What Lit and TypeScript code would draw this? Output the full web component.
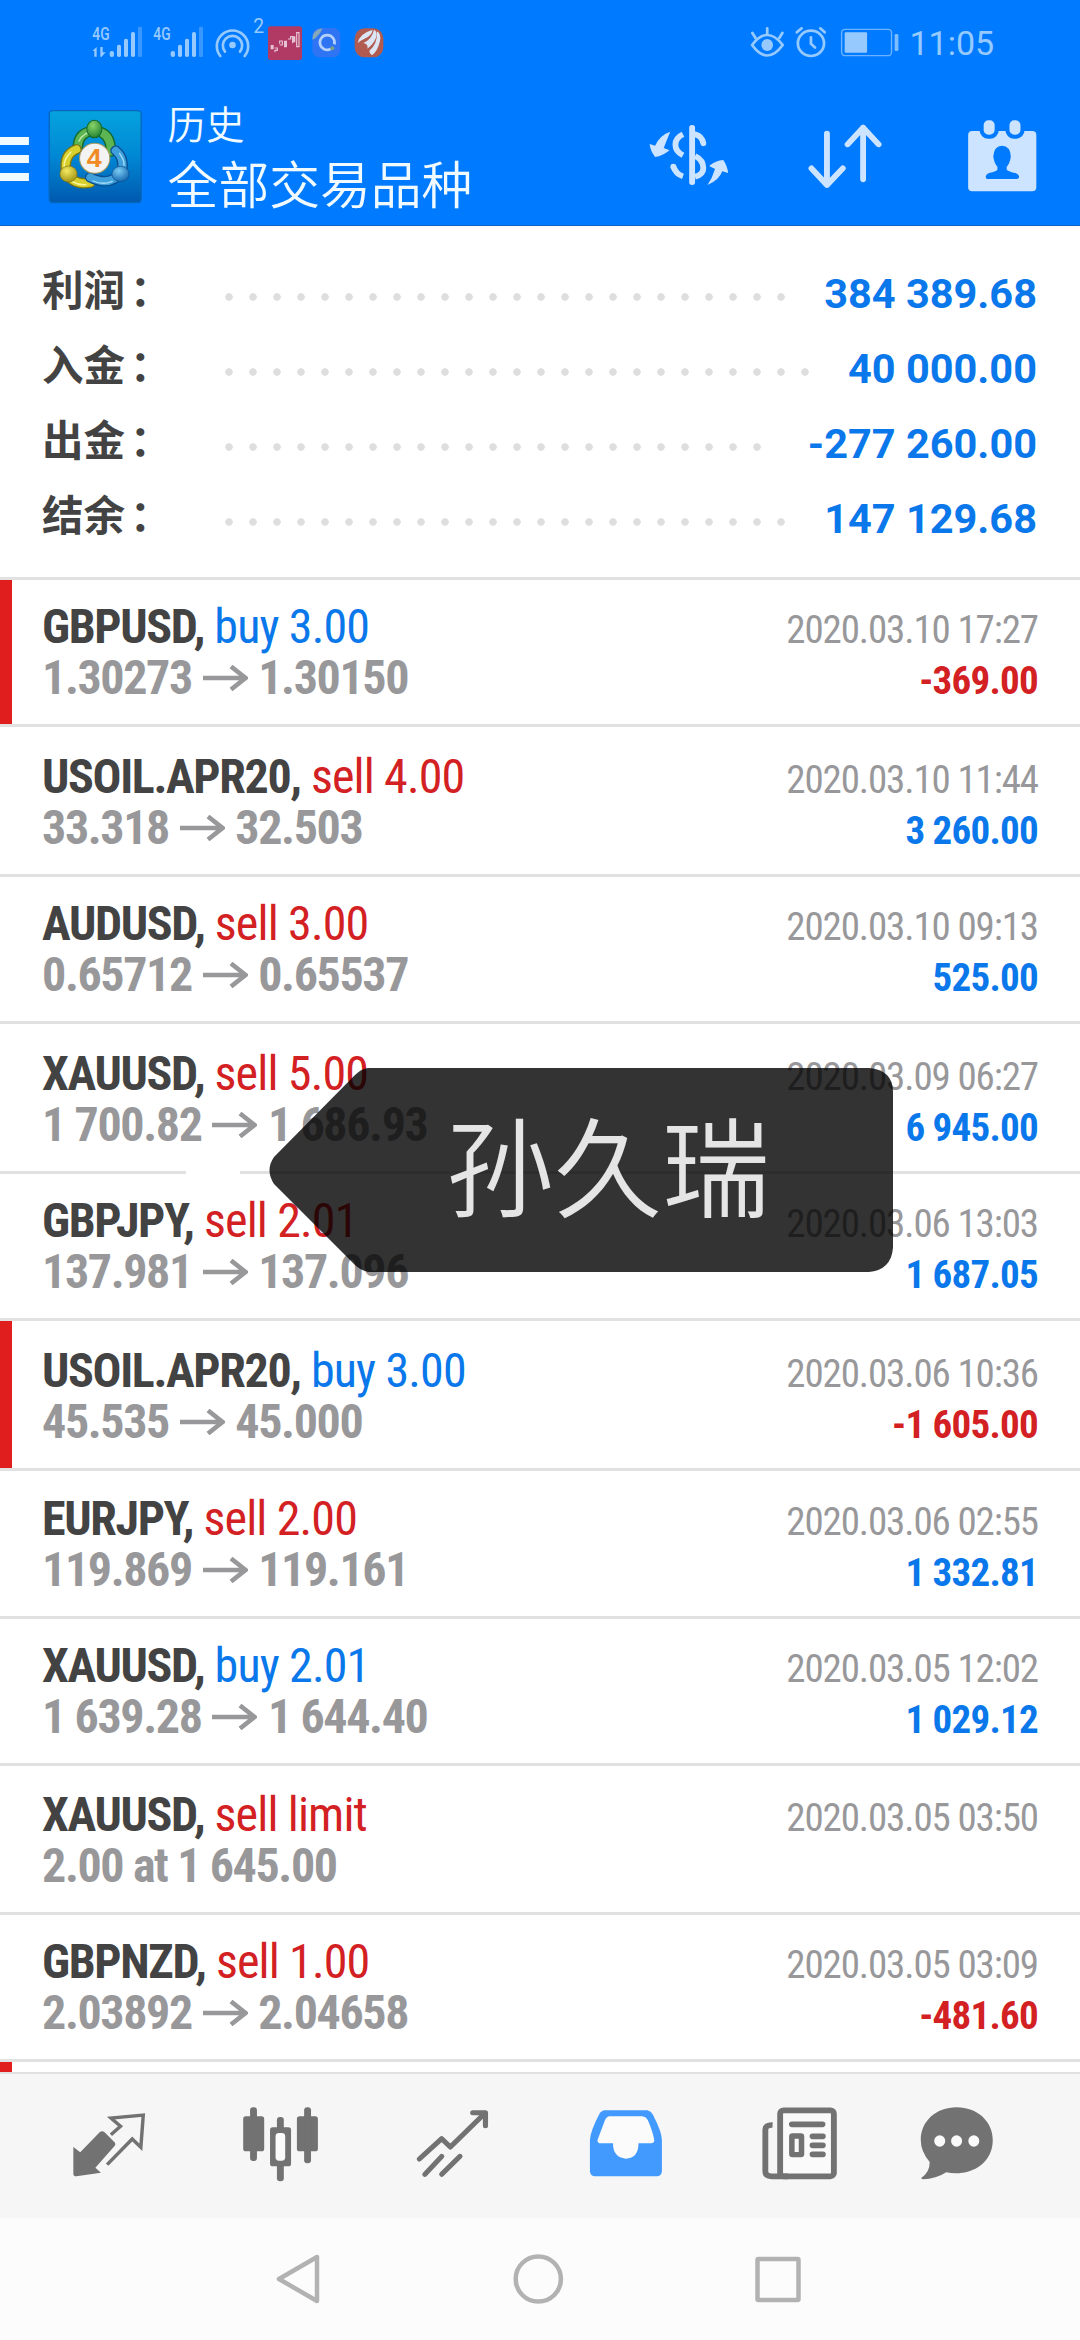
import { LitElement, html, svg, css, nothing, type TemplateResult } from "lit";
import { customElement, property } from "lit/decorators.js";
import { classMap } from "lit/directives/class-map.js";
import { styleMap } from "lit/directives/style-map.js";

interface Deal {
  symbol: string;
  side: "buy" | "sell";
  volume: string;
  from: string;
  to?: string;
  time: string;
  profit?: string;
  marked?: boolean;
  /** Additional space above the text, in pixels. */
  lead?: number;
}

const DEALS: Deal[] = [
  { symbol: "GBPUSD", side: "buy", volume: "3.00", from: "1.30273", to: "1.30150", time: "2020.03.10 17:27", profit: "-369.00", marked: true },
  { symbol: "USOIL.APR20", side: "sell", volume: "4.00", from: "33.318", to: "32.503", time: "2020.03.10 11:44", profit: "3 260.00", lead: 3 },
  { symbol: "AUDUSD", side: "sell", volume: "3.00", from: "0.65712", to: "0.65537", time: "2020.03.10 09:13", profit: "525.00" },
  { symbol: "XAUUSD", side: "sell", volume: "5.00", from: "1 700.82", to: "1 686.93", time: "2020.03.09 06:27", profit: "6 945.00", lead: 3 },
  { symbol: "GBPJPY", side: "sell", volume: "2.01", from: "137.981", to: "137.096", time: "2020.03.06 13:03", profit: "1 687.05" },
  { symbol: "USOIL.APR20", side: "buy", volume: "3.00", from: "45.535", to: "45.000", time: "2020.03.06 10:36", profit: "-1 605.00", marked: true, lead: 3 },
  { symbol: "EURJPY", side: "sell", volume: "2.00", from: "119.869", to: "119.161", time: "2020.03.06 02:55", profit: "1 332.81", lead: 1 },
  { symbol: "XAUUSD", side: "buy", volume: "2.01", from: "1 639.28", to: "1 644.40", time: "2020.03.05 12:02", profit: "1 029.12" },
  { symbol: "XAUUSD", side: "sell", volume: "limit", from: "2.00 at 1 645.00", time: "2020.03.05 03:50", lead: 2 },
  { symbol: "GBPNZD", side: "sell", volume: "1.00", from: "2.03892", to: "2.04658", time: "2020.03.05 03:09", profit: "-481.60" },
];

const SUMMARY = [
  { label: "利润", value: "384 389.68" },
  { label: "入金", value: "40 000.00" },
  { label: "出金", value: "-277 260.00" },
  { label: "结余", value: "147 129.68" },
];

// Icon artwork is drawn on a grid of 2.9037 x 3 units per pixel.
const art = (x: number, y: number, w: number, h: number, body: TemplateResult) => html`<svg
  width=${w / 2.9037}
  height=${h / 3}
  viewBox="${x} ${y} ${w} ${h}"
  preserveAspectRatio="none"
>${body}</svg>`;

@customElement("deal-row")
class DealRow extends LitElement {
  @property({ attribute: false }) deal!: Deal;

  static styles = css`
    :host { display: block; }
    .row {
      padding: 21px 42px 21px 42px;
      border-bottom: 3px solid #e1e1e1;
    }
    .marked {
      background: linear-gradient(#e01e1e, #e01e1e) no-repeat 0 0 / 12px 100%;
      background-clip: padding-box;
    }
    .line {
      display: flex;
      align-items: baseline;
      justify-content: space-between;
      height: 51px;
      line-height: 51px;
      white-space: pre;
      font-size: 48px;
      font-stretch: 75%;
    }
    .symbol { font-weight: 700; color: #434343; letter-spacing: -1.350px; }
    .side { letter-spacing: -0.850px; }
    .buy { color: #0a78ea; }
    .sell { color: #d32023; }
    .price { font-weight: 700; color: #98989b; letter-spacing: -1.380px; }
    .arrow { margin: 0 1px 0 1px; vertical-align: 3px; }
    .time { font-size: 39px; color: #98989b; letter-spacing: -1.120px; }
    .profit { font-size: 39px; font-weight: 700; color: #0a78ea; letter-spacing: -0.750px; }
    .minus { color: #d32023; }
  `;

  render() {
    const d = this.deal;
    return html`<div class=${classMap({ row: true, marked: !!d.marked })} style=${styleMap({ paddingTop: `${21 + (d.lead ?? 0)}px` })}>
      <div class="line"><span><span class="symbol">${d.symbol},</span><span class="side ${d.side}"> ${d.side} ${d.volume}</span></span><span class="time">${d.time}</span></div>
      <div class="line"><span class="price">${d.from}${d.to
        ? html` <svg class="arrow" width="45" height="26" viewBox="0 0 45 26"><path d="M0 13H42M28 1.500L42.500 13L28 24.500" fill="none" stroke="#98989b" stroke-width="4.600"/></svg> ${d.to}`
        : nothing}</span>${d.profit
        ? html`<span class=${classMap({ profit: true, minus: d.profit.startsWith("-") })}>${d.profit}</span>`
        : nothing}</div>
    </div>`;
  }
}

@customElement("app-root")
class AppRoot extends LitElement {
  static styles = css`
    :host {
      display: block;
      font-family: "Roboto Condensed", Roboto, "Noto Sans CJK SC", sans-serif;
    }
    svg { display: block; flex: none; }
    .screen {
      position: relative;
      display: flex;
      flex-direction: column;
      width: 1080px;
      height: 2340px;
      overflow: hidden;
      background: #fff;
    }
    .top {
      box-sizing: border-box;
      height: 226px;
      background: #007aff;
      border-bottom: 1px solid #0c62c4;
      flex: none;
    }
    .status { display: flex; height: 100px; align-items: flex-start; }
    .tray { margin: 15px 0 0 80px; }
    .system { margin: 20px 0 0 360px; }
    .clock {
      margin: 23px 0 0 8px;
      font: 400 34px/40px Roboto, sans-serif;
      color: #96caff;
    }
    .bar { display: flex; height: 115px; }
    .titles {
      display: flex;
      flex-direction: column;
      width: 432px;
      margin-left: -1.500px;
      font-family: "Noto Sans CJK SC", sans-serif;
      font-weight: 350;
      color: #f0faff;
      white-space: nowrap;
    }
    .heading { margin-top: 2px; font-size: 38.500px; line-height: 40px; height: 40px; }
    .filter { font-size: 50.800px; line-height: 60px; height: 60px; margin-top: 10px; }
    .summary {
      box-sizing: border-box;
      flex: none;
      height: 354px;
      padding: 29px 43px 0 42px;
      border-bottom: 3px solid #e1e1e1;
    }
    .entry { display: flex; height: 75px; align-items: center; }
    .label {
      width: 183px;
      margin-top: -9px;
      font: 700 41.500px/75px "Noto Sans CJK SC", sans-serif;
      color: #434343;
    }
    .colon { margin-left: 5px; }
    .dots {
      flex: 1;
      height: 8px;
      margin: 9px 36px 0 0;
      background: radial-gradient(circle at 4px 4px, #dedede 3.400px, transparent 4.100px) repeat-x 0 0 / 24px 8px;
    }
    .value {
      font: 700 41.500px/75px Roboto, sans-serif;
      color: #0a78ea;
      white-space: pre;
      margin-top: 1px;
    }
    .list { height: 1492px; overflow: hidden; flex: none; }
    .next { width: 12px; height: 10px; background: #e01e1e; }
    .tabs { display: flex; height: 146px; box-sizing: border-box; border-top: 2px solid #e1e1e1; background: #f6f6f6; flex: none; }
    .nav { display: flex; flex: 1; background: #fcfcfc; }
    .callout { position: absolute; left: 186px; top: 1068px; }
    .name {
      font-family: "Noto Sans CJK SC", sans-serif;
      font-weight: 350;
      font-size: 108px;
      fill: #e5e5e5;
    }
    .net { font: 500 56px Roboto, sans-serif; fill: #96caff; }
    .badge { font: 400 58px Roboto, sans-serif; fill: #96caff; }
    .four { font: 700 78px "Liberation Sans", sans-serif; fill: #f08a24; }
  `;

  private tray() {
    return html`<svg class="tray" width="310" height="50" viewBox="0 0 930 150">
      <text class="net" x="37" y="76" textLength="52" lengthAdjust="spacingAndGlyphs">4G</text>
      <text class="net" x="220" y="76" textLength="52" lengthAdjust="spacingAndGlyphs">4G</text>
      <g fill="#96caff">
        <path d="M37 108L50 96V125H43V108ZM61 96H68V112H77L64 126H61Z"/>
        <rect x="89" y="108" width="13" height="18" rx="6"/><rect x="111" y="89" width="12" height="37" rx="5"/><rect x="132" y="71" width="12" height="55" rx="5"/><rect x="153" y="51" width="12" height="75" rx="5"/>
        <rect x="272" y="108" width="13" height="18" rx="6"/><rect x="294" y="89" width="12" height="37" rx="5"/><rect x="315" y="71" width="12" height="55" rx="5"/><rect x="336" y="51" width="12" height="75" rx="5"/>
      </g>
      <g fill="#3a97ff"><rect x="174" y="35" width="12" height="91" rx="4"/><rect x="357" y="35" width="12" height="91" rx="4"/></g>
      <g fill="none" stroke="#96caff" stroke-width="8" stroke-linecap="round">
        <path d="M421 123A47 47 0 1 1 494 123M435 110A29 29 0 1 1 480 110"/>
      </g>
      <circle cx="457.500" cy="90" r="10" fill="#96caff"/>
      <text class="badge" x="520" y="53">2</text>
      <rect x="564" y="34" width="102" height="101" rx="8" fill="#b03a63"/>
      <g fill="none" stroke="#e6c4d4" stroke-width="3.500">
        <path d="M584 99h8v7h-7v6M599 86v-8h8v12h-8M624 72h8v-7h6v20"/><path d="M650 53h7v42h-7z"/>
      </g>
      <path d="M572 90h9v13h-9zM612 77h9v20h-9zM637 64h9v18h-9z" fill="#e6c4d4"/>
      <rect x="697" y="39" width="84" height="88" rx="22" fill="#2f74f2"/>
      <path d="M697 74Q697 44 728 40L720 54L706 70Z" fill="#85a9b8"/>
      <path d="M752 102A22 22 0 1 1 763 88" fill="none" stroke="#b4d2fb" stroke-width="8"/>
      <circle cx="757" cy="100" r="6" fill="#7da287"/>
      <rect x="824" y="40" width="86" height="87" rx="30" fill="#b15a50"/>
      <g fill="#dbe5f4">
        <path d="M833 84Q838 56 878 44Q876 62 852 72Q842 77 833 84Z"/>
        <path d="M850 84Q876 72 882 44Q894 50 888 68Q880 88 862 101Q866 88 850 84Z"/>
        <path d="M891 49Q904 57 900 78Q893 108 876 121Q868 116 868 107Q892 90 891 49Z"/>
      </g>
    </svg>`;
  }

  private system() {
    return html`<div class="system">${art(610, 60, 440, 120, svg`
      <g fill="none" stroke="#96caff" stroke-width="8" stroke-linecap="round">
        <path d="M616 135Q660 75 705 135Q660 198 616 135Z" stroke-linejoin="round"/>
        <path d="M617 99L626 114M660 85V102M704 99L695 114"/>
        <ellipse cx="787" cy="130" rx="38" ry="38"/>
        <path d="M746 97L760 85M827 97L814 85M787 112V131L799 143"/>
      </g>
      <ellipse cx="660" cy="135" rx="17" ry="18" fill="#96caff"/>
      <rect x="876" y="88" width="145" height="79" rx="10" fill="none" stroke="#6cb3ff" stroke-width="4"/>
      <rect x="885" y="97" width="65" height="61" rx="3" fill="#96caff"/>
      <rect x="1030" y="102" width="11" height="51" rx="4" fill="#7dbcff"/>`)}</div>`;
  }

  private brand() {
    return art(0, 300, 491, 345, svg`
      <defs>
        <linearGradient id="sky" x1="0" y1="0" x2="0" y2="1"><stop offset="0" stop-color="#05a3de"/><stop offset=".5" stop-color="#0087d4"/><stop offset="1" stop-color="#0059ae"/></linearGradient>
        <radialGradient id="grn" cx=".4" cy=".3" r=".8"><stop offset="0" stop-color="#8ad36a"/><stop offset="1" stop-color="#167a2c"/></radialGradient>
        <radialGradient id="ylw" cx=".4" cy=".3" r=".8"><stop offset="0" stop-color="#f4ea62"/><stop offset="1" stop-color="#9a8a0c"/></radialGradient>
        <radialGradient id="blu" cx=".4" cy=".3" r=".8"><stop offset="0" stop-color="#7cccf4"/><stop offset="1" stop-color="#0a5ca6"/></radialGradient>
      </defs>
      <path d="M0 411H84V435H0ZM0 465H84V489H0ZM0 519H84V543H0Z" fill="#f0faff"/>
      <rect x="143" y="332" width="267" height="276" rx="10" fill="url(#sky)" stroke="#0668bd" stroke-width="4"/>
      <g fill="none" stroke-linecap="round">
        <path d="M226 440Q228 396 274 392Q322 396 322 455" stroke="#14692a" stroke-width="31"/>
        <path d="M226 440Q228 396 274 392Q322 396 322 455" stroke="#5cb452" stroke-width="23"/>
        <path d="M229 424Q242 396 274 393" stroke="#c0e8a4" stroke-width="4"/>
        <path d="M222 448Q184 464 192 515Q212 558 262 548" stroke="#7e7410" stroke-width="31"/>
        <path d="M222 448Q184 464 192 515Q212 558 262 548" stroke="#d8d02c" stroke-width="23"/>
        <path d="M206 456Q182 480 187 505M210 545Q228 556 250 554" stroke="#f8f4a0" stroke-width="4"/>
        <path d="M336 452Q362 474 354 515Q320 562 262 532" stroke="#0b4f92" stroke-width="31"/>
        <path d="M336 452Q362 474 354 515Q320 562 262 532" stroke="#3fa0dc" stroke-width="23"/>
        <path d="M347 460Q362 482 360 496M270 543Q300 556 326 544" stroke="#a4dcf8" stroke-width="4"/>
      </g>
      <ellipse cx="274" cy="387" rx="22" ry="26" fill="url(#grn)" stroke="#14692a" stroke-width="3"/>
      <ellipse cx="199" cy="522" rx="25" ry="24" fill="url(#ylw)" stroke="#7e7410" stroke-width="2"/>
      <ellipse cx="350" cy="522" rx="25" ry="23" fill="url(#blu)" stroke="#0b4f92" stroke-width="2"/>
      <ellipse cx="275" cy="475" rx="44" ry="45" fill="#f3f3f3" stroke="#a99a5c" stroke-width="3"/>
      <text class="four" x="252" y="501">4</text>`);
  }

  private actions() {
    return html`
      ${art(174, 300, 482, 345, svg`
        <g fill="#cce4ff">
          <rect x="433" y="375" width="17" height="180" rx="8"/>
          <path d="M378 395Q366 425 359 444L376 451Q356 468 334 471Q320 452 318 432L334 437Q348 405 378 395Z"/>
          <path d="M486 555Q500 535 508 507L491 498Q510 482 532 480Q544 498 546 519L529 514Q520 541 486 555Z"/>
        </g>
        <g fill="none" stroke="#cce4ff" stroke-width="17">
          <path d="M450 403Q470 408 474 430" stroke-linecap="round"/><path d="M450 468Q474 480 474 504Q474 524 450 530"/>
          <path d="M415 403Q393 414 393 434Q393 454 415 466"/><path d="M387 500Q394 522 415 529"/>
        </g><circle cx="387" cy="500" r="8.500" fill="#cce4ff"/>`)}
      ${art(656, 300, 453, 345, svg`
        <path d="M833 401V555M788 505L833 555L879 505M938 538V383M893 433L938 383L983 433" fill="none" stroke="#cce4ff" stroke-width="17" stroke-linecap="round" stroke-linejoin="round"/>`)}
      ${art(1109, 300, 459, 345, svg`
        <rect x="1243" y="393" width="198" height="181" rx="12" fill="#cce4ff"/>
        <g fill="#cce4ff" stroke="#007aff" stroke-width="12"><rect x="1282" y="355" width="44" height="55" rx="20"/><rect x="1357" y="355" width="44" height="55" rx="20"/></g>
        <path d="M1341 437Q1366 438 1367 470Q1364 490 1355 500V509Q1361 515 1380 519Q1391 523 1391 532Q1390 537 1384 537H1299Q1294 537 1294 530Q1295 521 1306 518Q1323 515 1328 509V500Q1319 490 1316 470Q1318 438 1341 437Z" fill="#007aff"/>`)}`;
  }

  private tabs() {
    const c = "#727272";
    return html`
      ${art(0, 74, 569, 431, svg`
        <path d="M213 293L233 309L290 248Q297 243 303 248L334 280Q337 286 332 291L277 355L293 370L222 381Q213 381 213 374Z" fill=${c}/>
        <path d="M322 256L350 231L322 206L416 197L409 294L384 269L311 346" fill="none" stroke=${c} stroke-width="10"/>`)}
      ${art(569, 74, 497, 431, svg`
        <g fill=${c}><rect x="706" y="201" width="61" height="105" rx="8"/><rect x="862" y="201" width="61" height="105" rx="8"/><rect x="726" y="174" width="20" height="161" rx="9"/><rect x="883" y="174" width="20" height="168" rx="9"/><rect x="804" y="203" width="20" height="40" rx="9"/><rect x="804" y="343" width="20" height="53" rx="9"/><rect x="784" y="234" width="61" height="117" rx="8"/></g>
        <rect x="800" y="251" width="28" height="83" rx="10" fill="#fbfbfb"/>`)}
      ${art(1066, 74, 502, 431, svg`
        <path d="M1218 329L1283 268L1308 293L1409 191M1373 190H1410V229M1234 375L1283 321M1283 375L1336 321" fill="none" stroke=${c} stroke-width="15" stroke-linecap="round" stroke-linejoin="round"/>`)}
      ${art(0, 74, 502, 431, svg`
        <path d="M188 183H312Q322 185 328 196Q354 248 354 272V366Q353 379 341 381H158Q146 379 145 366V272Q147 244 172 195Q178 184 188 183Z" fill="#429aff"/>
        <path d="M201 201H298Q309 203 313 212Q329 250 332 274Q331 281 324 282H286Q286 327 249 328Q212 325 212 282H172Q166 279 167 272L188 214Q192 203 201 201Z" fill="#fbfbfb"/>`)}
      ${art(502, 74, 503, 431, svg`
        <rect x="697" y="183" width="156" height="198" rx="10" fill="#fafafa" stroke=${c} stroke-width="17"/>
        <path d="M675 227Q654 226 654 242V366Q654 381 672 381H720" fill="none" stroke=${c} stroke-width="17"/>
        <path d="M731 225H820M791 261H821M791 288H821M791 315H821" stroke=${c} stroke-width="17" stroke-linecap="round"/>
        <rect x="731" y="260" width="28" height="56" rx="2" fill="#fafafa" stroke=${c} stroke-width="16" stroke-linejoin="round"/>`)}
      ${art(1005, 74, 563, 431, svg`
        <path d="M1210 174C1270 174 1315 216 1315 272C1315 350 1240 383 1180 369Q1150 389 1112 390Q1106 389 1108 385Q1132 369 1132 338Q1106 307 1106 272C1106 216 1150 174 1210 174Z" fill=${c}/>
        <g fill="#fafafa"><ellipse cx="1161" cy="275" rx="16" ry="17"/><ellipse cx="1210" cy="275" rx="16" ry="17"/><ellipse cx="1260" cy="275" rx="16" ry="17"/></g>`)}`;
  }

  private nav() {
    return html`<svg width="1080" height="120" viewBox="0 2218 1080 120" fill="none" stroke="#b2b2b2" stroke-width="4.500" stroke-linejoin="round">
      <path d="M317 2257V2301L279 2279Z"/>
      <circle cx="538.300" cy="2279" r="22.600"/>
      <rect x="757.500" y="2259" width="41" height="41" rx="1"/>
    </svg>`;
  }

  render() {
    return html`<div class="screen">
      <div class="top">
        <div class="status">${this.tray()}${this.system()}<div class="clock">11:05</div></div>
        <div class="bar">
          ${this.brand()}
          <div class="titles"><div class="heading">历史</div><div class="filter">全部交易品种</div></div>
          ${this.actions()}
        </div>
      </div>
      <div class="summary">
        ${SUMMARY.map((s) => html`<div class="entry"><div class="label">${s.label}<span class="colon">：</span></div><div class="dots"></div><div class="value">${s.value}</div></div>`)}
      </div>
      <div class="list">
        ${DEALS.map((d) => html`<deal-row .deal=${d}></deal-row>`)}
        <div class="next"></div>
      </div>
      <div class="tabs">${this.tabs()}</div>
      <div class="nav">${this.nav()}</div>
      <svg class="callout" width="710" height="206" viewBox="186 1068 710 206">
        <rect x="186" y="1169" width="54" height="7" fill="#fff"/>
        <path d="M368 1068H869Q893 1070 893 1092V1248Q891 1270 869 1272H368Q360 1270 355 1265L274 1184Q265 1170 274 1157L355 1075Q361 1069 368 1068Z" fill="#000" fill-opacity=".8"/>
        <text class="name" x="446" y="1209">孙久瑞</text>
      </svg>
    </div>`;
  }
}
